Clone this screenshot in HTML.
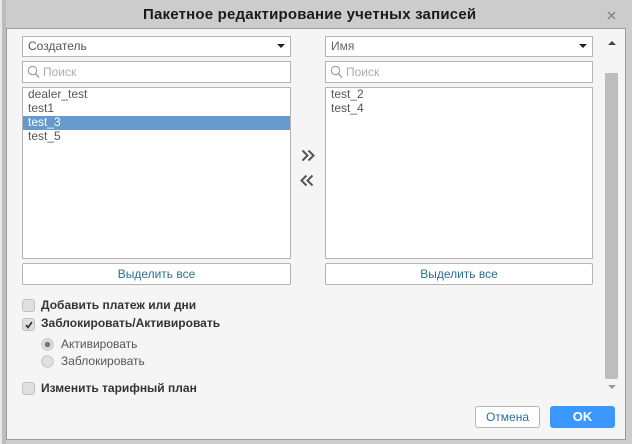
<!DOCTYPE html>
<html><head><meta charset="utf-8"><style>
html,body{margin:0;padding:0;width:632px;height:444px;overflow:hidden;background:#ccc;font-family:"Liberation Sans","Noto Sans CJK SC",sans-serif;}
.a{position:absolute;box-sizing:border-box;white-space:nowrap;}
.box{background:#fff;border:1px solid #b4b4b4;}
.t{font-size:12px;color:#555;line-height:14px;}
.btn{background:#fff;border:1px solid #b4b4b4;border-radius:2px;text-align:center;color:#2a6f97;font-size:12px;line-height:20px;}
.cb{width:13px;height:13px;background:#e0e0e0;border:1px solid #c0c0c0;border-radius:3px;}
.lab{font-size:12px;font-weight:bold;color:#333;line-height:14px;}
.ph{font-size:12px;color:#aaa;line-height:20px;}
</style></head><body>
<div class="a" style="left:0;top:0;width:2px;height:444px;background:#e8e8e8"></div>
<div class="a" style="left:2px;top:0;width:4px;height:444px;background:#bdbdbd"></div>
<div class="a" style="left:6px;top:28px;width:620px;height:412px;background:#f5f5f5;border:1px solid #9c9c9c"></div>
<div class="a" style="left:143px;top:0;font-size:15px;font-weight:bold;color:#1a1a1a;line-height:30px;letter-spacing:.2px">Пакетное редактирование учетных записей</div>
<svg class="a" style="left:607px;top:11px" width="9" height="9"><path d="M1 1L8 8M8 1L1 8" stroke="#777" stroke-width="1.2"/></svg>

<div class="a box" style="left:22px;top:36px;width:269px;height:21px"></div>
<div class="a t" style="left:28px;top:39px">Создатель</div>
<svg class="a" style="left:277px;top:44px" width="8" height="5"><path d="M0 0H8L4 4Z" fill="#222"/></svg>
<div class="a box" style="left:22px;top:61px;width:269px;height:22px"></div>
<svg class="a" style="left:27px;top:65px" width="13" height="14"><circle cx="5.5" cy="5.5" r="4.2" fill="none" stroke="#999" stroke-width="1.1"/><path d="M8.6 8.8L12 12.5" stroke="#999" stroke-width="1.3"/></svg>
<div class="a ph" style="left:43px;top:62px">Поиск</div>
<div class="a box" style="left:22px;top:87px;width:269px;height:172px"></div>
<div class="a" style="left:23px;top:116px;width:267px;height:14px;background:#6699cc"></div>
<div class="a t" style="left:28px;top:87px">dealer_test</div>
<div class="a t" style="left:28px;top:101px">test1</div>
<div class="a t" style="left:28px;top:115px;color:#fff">test_3</div>
<div class="a t" style="left:28px;top:129px">test_5</div>
<div class="a btn" style="left:22px;top:263px;width:269px;height:22px">Выделить все</div>

<svg class="a" style="left:301px;top:149px" width="15" height="13"><path d="M1.5 1.5L6.5 6.5L1.5 11.5M7.5 1.5L12.5 6.5L7.5 11.5" fill="none" stroke="#555" stroke-width="2"/></svg>
<svg class="a" style="left:300px;top:174px" width="15" height="13"><path d="M6.5 1.5L1.5 6.5L6.5 11.5M12.5 1.5L7.5 6.5L12.5 11.5" fill="none" stroke="#555" stroke-width="2"/></svg>

<div class="a box" style="left:325px;top:36px;width:268px;height:21px"></div>
<div class="a t" style="left:331px;top:39px;color:#666">Имя</div>
<svg class="a" style="left:579px;top:44px" width="8" height="5"><path d="M0 0H8L4 4Z" fill="#222"/></svg>
<div class="a box" style="left:325px;top:61px;width:268px;height:22px"></div>
<svg class="a" style="left:330px;top:65px" width="13" height="14"><circle cx="5.5" cy="5.5" r="4.2" fill="none" stroke="#999" stroke-width="1.1"/><path d="M8.6 8.8L12 12.5" stroke="#999" stroke-width="1.3"/></svg>
<div class="a ph" style="left:346px;top:62px">Поиск</div>
<div class="a box" style="left:325px;top:87px;width:268px;height:172px"></div>
<div class="a t" style="left:331px;top:87px">test_2</div>
<div class="a t" style="left:331px;top:101px">test_4</div>
<div class="a btn" style="left:325px;top:263px;width:268px;height:22px">Выделить все</div>

<svg class="a" style="left:608px;top:41px" width="8" height="5"><path d="M4 0L8 4H0Z" fill="#444"/></svg>
<div class="a" style="left:605px;top:73px;width:13px;height:306px;background:#bdbdbd;border-radius:0 0 2px 2px"></div>
<svg class="a" style="left:608px;top:385px" width="8" height="5"><path d="M0 0H8L4 4Z" fill="#999"/></svg>

<div class="a cb" style="left:22px;top:299px"></div>
<div class="a lab" style="left:41px;top:298px">Добавить платеж или дни</div>
<div class="a cb" style="left:22px;top:318px"></div>
<svg class="a" style="left:24px;top:320px" width="10" height="10"><path d="M2 5L4 7.5L8 2" fill="none" stroke="#333" stroke-width="1.7"/></svg>
<div class="a lab" style="left:41px;top:316px">Заблокировать/Активировать</div>
<svg class="a" style="left:41px;top:338px" width="13" height="13"><circle cx="6.5" cy="6.5" r="5.7" fill="#e0e0e0" stroke="#c4c4c4"/><circle cx="6.5" cy="6.5" r="2.8" fill="#777"/></svg>
<div class="a t" style="left:61px;top:337px;font-size:12px">Активировать</div>
<svg class="a" style="left:41px;top:355px" width="13" height="13"><circle cx="6.5" cy="6.5" r="5.7" fill="#e0e0e0" stroke="#c4c4c4"/></svg>
<div class="a t" style="left:61px;top:354px;font-size:12px">Заблокировать</div>
<div class="a cb" style="left:22px;top:382px"></div>
<div class="a lab" style="left:41px;top:381px">Изменить тарифный план</div>

<div class="a btn" style="left:475px;top:406px;width:65px;height:22px;border-radius:3px">Отмена</div>
<div class="a" style="left:550px;top:406px;width:65px;height:22px;background:#3a97ff;border-radius:3px;color:#fff;font-weight:bold;font-size:13px;line-height:22px;text-align:center">OK</div>
</body></html>
